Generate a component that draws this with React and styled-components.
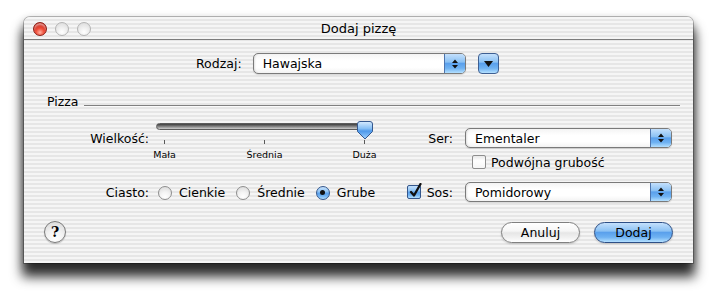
import React from 'react';
import styled, { createGlobalStyle, css } from 'styled-components';

const GlobalStyle = createGlobalStyle`
  html, body { margin: 0; padding: 0; background: #fff; }
  body {
    font-family: "DejaVu Sans", "Lucida Grande", sans-serif;
    font-size: 12.5px;
    color: #000;
  }
`;

const pinstripe = css`
  background: repeating-linear-gradient(
    to bottom,
    #f5f5f5 0px, #f5f5f5 2px,
    #e6e6e6 2px, #e6e6e6 4px
  );
`;

const aquaBlue = css`
  background: linear-gradient(
    to bottom,
    #c4e0fc 0%, #8cc2f4 42%, #5aa0ec 50%, #6fb2f2 75%, #b4e0ff 100%
  );
`;

const aquaWhite = css`
  background: linear-gradient(
    to bottom,
    #ffffff 0%, #f6f6f6 42%, #e6e6e6 52%, #f2f2f2 78%, #ffffff 100%
  );
`;

const Stage = styled.div`
  padding: 17px 0 40px 24px;
`;

const Window = styled.div`
  width: 669px;
  height: 246px;
  box-sizing: border-box;
  display: flex;
  flex-direction: column;
  border-radius: 6px 6px 0 0;
  ${pinstripe}
  box-shadow: 0 0 0 1px rgba(0, 0, 0, 0.25), 0 12px 12px 2px rgba(0, 0, 0, 0.8),
    0 3px 10px rgba(0, 0, 0, 0.3);
`;

const TitleBar = styled.div`
  height: 22px;
  display: grid;
  grid-template-columns: 1fr auto 1fr;
  align-items: center;
  border-bottom: 1px solid #7c7c7c;
  border-radius: 6px 6px 0 0;
`;

const Lights = styled.div`
  display: flex;
  gap: 8px;
  padding-left: 9px;
`;

const Light = styled.span`
  width: 14px;
  height: 14px;
  box-sizing: border-box;
  border-radius: 50%;
  ${(p) =>
    p.$red
      ? css`
          border: 1px solid #8c1d14;
          background: radial-gradient(circle at 50% 78%, #ffb0a0 0%, #f0503c 35%, #c71e12 75%, #a81a10 100%);
          box-shadow: inset 0 2px 2px rgba(255, 255, 255, 0.55);
        `
      : css`
          border: 1px solid #b4b4b4;
          background: radial-gradient(circle at 50% 75%, #ffffff 0%, #eeeeee 45%, #d8d8d8 100%);
        `}
`;

const Title = styled.div`
  font-size: 13px;
  line-height: 22px;
  padding-top: 1px;
`;

const Content = styled.div`
  flex: 1;
  display: flex;
  flex-direction: column;
  padding: 13px 0 20px 0;
`;

const TopRow = styled.div`
  display: flex;
  align-items: center;
  height: 21px;
  padding-left: 172px;
`;

const Label = styled.span`
  white-space: nowrap;
  line-height: 15px;
`;

const TopLabel = styled(Label)`
  margin-right: 11px;
`;

const PopupBox = styled.div`
  width: ${(p) => p.$w}px;
  height: ${(p) => p.$h}px;
  box-sizing: border-box;
  display: flex;
  align-items: stretch;
  border: 1px solid #7a7a7a;
  border-radius: 5px;
  overflow: hidden;
  background: linear-gradient(to bottom, #f4f4f4 0%, #ffffff 35%, #ffffff 70%, #f3f3f3 100%);
  box-shadow: 0 1px 1px rgba(0, 0, 0, 0.12), inset 2px 0 2px -1px rgba(0, 0, 0, 0.12);
`;

const PopupText = styled.span`
  flex: 1;
  display: flex;
  align-items: center;
  padding-left: 9px;
  white-space: nowrap;
`;

const PopupArrows = styled.span`
  width: 20px;
  display: flex;
  align-items: center;
  justify-content: center;
  border-left: 1px solid #4d74ad;
  ${aquaBlue}
`;

const Disclosure = styled.div`
  width: 21px;
  height: 21px;
  box-sizing: border-box;
  margin-left: 12px;
  display: flex;
  align-items: center;
  justify-content: center;
  border: 1px solid #3e5f92;
  border-radius: 4px;
  ${aquaBlue}
`;

const GroupHeader = styled.div`
  display: flex;
  align-items: flex-end;
  height: 14px;
  margin-top: 21px;
  padding: 0 13px 0 23px;
`;

const GroupTitle = styled.span`
  line-height: 14px;
`;

const GroupLine = styled.div`
  flex: 1;
  height: 1px;
  margin: 0 0 3px 5px;
  background: #808080;
  box-shadow: 0 1px 0 #fbfbfb;
`;

const GroupBody = styled.div`
  display: flex;
`;

const LeftCol = styled.div`
  width: 380px;
  padding-top: 14px;
  display: flex;
  flex-direction: column;
`;

const SliderRow = styled.div`
  display: flex;
  align-items: flex-start;
`;

const FieldLabel = styled(Label)`
  width: 125px;
  text-align: right;
  padding-top: ${(p) => p.$pt || 0}px;
`;

const SliderBlock = styled.div`
  position: relative;
  width: 217px;
  margin-left: 7px;
  display: flex;
  flex-direction: column;
`;

const Track = styled.div`
  height: 7px;
  box-sizing: border-box;
  border-radius: 4px;
  border: 1px solid #5c5c5c;
  background: linear-gradient(to bottom, #3e3e3e 0%, #6e6e6e 35%, #a9a9a9 75%, #cfcfcf 100%);
`;

const Thumb = styled.svg`
  position: absolute;
  left: 201px;
  top: -2px;
`;

const TickRow = styled.div`
  display: flex;
  justify-content: space-between;
  padding: 0 8px;
  margin-top: 10px;
`;

const Tick = styled.div`
  width: 1px;
  display: flex;
  flex-direction: column;
  align-items: center;
`;

const TickMark = styled.div`
  width: 1px;
  height: 4px;
  background: #5a5a5a;
`;

const TickLabel = styled.span`
  margin-top: 5px;
  font-size: 9.5px;
  line-height: 12px;
  white-space: nowrap;
`;

const RadioRow = styled.div`
  display: flex;
  align-items: center;
  height: 15px;
  margin-top: 24px;
`;

const RadioGroup = styled.div`
  display: flex;
  align-items: center;
  gap: 11px;
  margin-left: 9px;
`;

const Option = styled.label`
  display: flex;
  align-items: center;
  gap: 7px;
  white-space: nowrap;
  line-height: 15px;
`;

const Radio = styled.span`
  width: 14px;
  height: 14px;
  box-sizing: border-box;
  border-radius: 50%;
  display: flex;
  align-items: center;
  justify-content: center;
  ${(p) =>
    p.$on
      ? css`
          border: 1px solid #34578c;
          ${aquaBlue}
        `
      : css`
          border: 1px solid #8e8e8e;
          background: radial-gradient(circle at 50% 80%, #ffffff 0%, #f4f4f4 40%, #d6d6d6 100%);
        `}
`;

const RadioDot = styled.span`
  width: 5px;
  height: 5px;
  border-radius: 50%;
  background: #111;
`;

const RightCol = styled.div`
  padding-top: 19px;
  display: flex;
  flex-direction: column;
`;

const RightRow = styled.div`
  display: flex;
  align-items: center;
  gap: 12px;
  margin-top: ${(p) => p.$mt || 0}px;
`;

const RightLabel = styled.div`
  width: 49px;
  display: flex;
  justify-content: flex-end;
  align-items: center;
  gap: 6px;
`;

const CheckOption = styled.label`
  display: flex;
  align-items: center;
  gap: 5px;
  height: 14px;
  margin-left: 7px;
  white-space: nowrap;
`;

const CheckBox = styled.span`
  position: relative;
  width: 14px;
  height: 14px;
  box-sizing: border-box;
  border-radius: 2px;
  ${(p) =>
    p.$on
      ? css`
          border: 1px solid #34578c;
          ${aquaBlue}
        `
      : css`
          border: 1px solid #8e8e8e;
          background: linear-gradient(to bottom, #e8e8e8 0%, #ffffff 40%, #f6f6f6 100%);
        `}
`;

const CheckMark = styled.svg`
  position: absolute;
  left: 1px;
  top: -3px;
`;

const BottomRow = styled.div`
  margin-top: auto;
  display: flex;
  align-items: center;
  height: 22px;
  padding: 0 20px;
`;

const HelpButton = styled.div`
  width: 22px;
  height: 22px;
  box-sizing: border-box;
  border-radius: 50%;
  border: 1px solid #7a7a7a;
  display: flex;
  align-items: center;
  justify-content: center;
  font-family: "DejaVu Serif", "Liberation Serif", serif;
  font-weight: bold;
  font-size: 14px;
  background: radial-gradient(circle at 50% 85%, #ffffff 0%, #f2f2f2 45%, #d4d4d4 100%);
  box-shadow: 0 1px 1px rgba(0, 0, 0, 0.2);
`;

const Spacer = styled.div`
  flex: 1;
`;

const PushButton = styled.button`
  width: 79px;
  height: 21px;
  box-sizing: border-box;
  padding: 0;
  margin-left: ${(p) => p.$ml || 0}px;
  border-radius: 11px;
  font-family: inherit;
  font-size: 12.5px;
  color: #000;
  line-height: 19px;
  ${(p) =>
    p.$default
      ? css`
          border: 1px solid #2d4f86;
          ${aquaBlue}
        `
      : css`
          border: 1px solid #808080;
          ${aquaWhite}
        `}
  box-shadow: 0 1px 2px rgba(0, 0, 0, 0.18);
`;

const UpDown = () => (
  <svg width="6" height="10" viewBox="0 0 6 10">
    <path d="M3 0.5 L6 4 H0 Z M0 6 H6 L3 9.5 Z" fill="#111" />
  </svg>
);

const Popup = ({ w, h, children }) => (
  <PopupBox $w={w} $h={h}>
    <PopupText>{children}</PopupText>
    <PopupArrows>
      <UpDown />
    </PopupArrows>
  </PopupBox>
);

const ticks = ['Mała', 'Średnia', 'Duża'];

export default function App() {
  return (
    <>
      <GlobalStyle />
      <Stage>
        <Window>
          <TitleBar>
            <Lights>
              <Light $red />
              <Light />
              <Light />
            </Lights>
            <Title>Dodaj pizzę</Title>
            <span />
          </TitleBar>
          <Content>
            <TopRow>
              <TopLabel>Rodzaj:</TopLabel>
              <Popup w={213} h={21}>Hawajska</Popup>
              <Disclosure>
                <svg width="9" height="6" viewBox="0 0 9 6">
                  <path d="M0 0 H9 L4.5 6 Z" fill="#111" />
                </svg>
              </Disclosure>
            </TopRow>

            <GroupHeader>
              <GroupTitle>Pizza</GroupTitle>
              <GroupLine />
            </GroupHeader>

            <GroupBody>
              <LeftCol>
                <SliderRow>
                  <FieldLabel $pt={8}>Wielkość:</FieldLabel>
                  <SliderBlock>
                    <Track />
                    <Thumb width="16" height="19" viewBox="0 0 16 19">
                      <defs>
                        <linearGradient id="thumbGrad" x1="0" y1="0" x2="0" y2="1">
                          <stop offset="0" stopColor="#d8ecff" />
                          <stop offset="0.4" stopColor="#86bff5" />
                          <stop offset="0.55" stopColor="#4e98ea" />
                          <stop offset="1" stopColor="#9fd2ff" />
                        </linearGradient>
                      </defs>
                      <path
                        d="M3 0.5 H13 A2.5 2.5 0 0 1 15.5 3 V10.5 L8 18 L0.5 10.5 V3 A2.5 2.5 0 0 1 3 0.5 Z"
                        fill="url(#thumbGrad)"
                        stroke="#35588e"
                        strokeWidth="1"
                      />
                    </Thumb>
                    <TickRow>
                      {ticks.map((t) => (
                        <Tick key={t}>
                          <TickMark />
                          <TickLabel>{t}</TickLabel>
                        </Tick>
                      ))}
                    </TickRow>
                  </SliderBlock>
                </SliderRow>

                <RadioRow>
                  <FieldLabel>Ciasto:</FieldLabel>
                  <RadioGroup>
                    <Option>
                      <Radio />
                      Cienkie
                    </Option>
                    <Option>
                      <Radio />
                      Średnie
                    </Option>
                    <Option>
                      <Radio $on>
                        <RadioDot />
                      </Radio>
                      Grube
                    </Option>
                  </RadioGroup>
                </RadioRow>
              </LeftCol>

              <RightCol>
                <RightRow>
                  <RightLabel>
                    <Label>Ser:</Label>
                  </RightLabel>
                  <Popup w={207} h={20}>Ementaler</Popup>
                </RightRow>
                <RightRow $mt={7}>
                  <RightLabel />
                  <CheckOption>
                    <CheckBox />
                    Podwójna grubość
                  </CheckOption>
                </RightRow>
                <RightRow $mt={13}>
                  <RightLabel>
                    <CheckBox $on>
                      <CheckMark width="14" height="15" viewBox="0 0 14 15">
                        <path
                          d="M2 9 L5 12.5 L11.5 1"
                          fill="none"
                          stroke="#111"
                          strokeWidth="2.3"
                          strokeLinecap="round"
                          strokeLinejoin="round"
                        />
                      </CheckMark>
                    </CheckBox>
                    <Label>Sos:</Label>
                  </RightLabel>
                  <Popup w={207} h={20}>Pomidorowy</Popup>
                </RightRow>
              </RightCol>
            </GroupBody>

            <BottomRow>
              <HelpButton>?</HelpButton>
              <Spacer />
              <PushButton>Anuluj</PushButton>
              <PushButton $default $ml={14}>
                Dodaj
              </PushButton>
            </BottomRow>
          </Content>
        </Window>
      </Stage>
    </>
  );
}
